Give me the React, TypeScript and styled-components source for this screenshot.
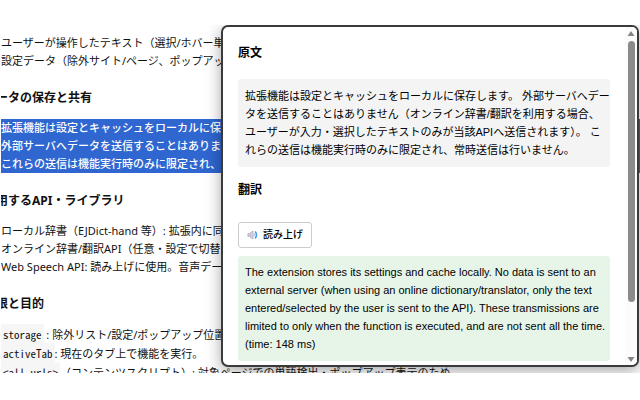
import React from "react";
import styled, { createGlobalStyle, css } from "styled-components";

const GlobalStyle = createGlobalStyle`
  * { box-sizing: border-box; }
  body { margin: 0; background: #fff; color: #111; overflow: hidden; }
`;

const Stage = styled.main`
  position: relative;
  height: calc(100vh - 52px);
  margin: 25px 0 27px;
  overflow: hidden;
  font: 11px/18px "Noto Sans", "Noto Sans CJK JP", sans-serif;
`;

const Clip = styled.div`
  height: 100%;
  margin-left: 1px;
  overflow: hidden;
`;

const Article = styled.article`
  margin-left: -17px;
  padding-top: 9px;
  white-space: nowrap;
`;

const List = styled.ul<{ $roomy?: boolean }>`
  margin: 0;
  padding: 0 0 0 17px;
  list-style: none;
  line-height: ${(p) => (p.$roomy ? "19px" : "18px")};
`;

const Selection = styled.p`
  margin: 0 0 0 17px;
  background: #2f66d0;
  color: #fff;
  font-weight: 500;
`;

const heading = css`
  font-size: 12px;
  line-height: 18px;
  font-weight: 700;
`;

const SectionTitle = styled.h3`
  ${heading}
  margin: 19px 0 12px;
`;

const Code = styled.code`
  padding: 2px;
  border-radius: 3px;
  background: #f6f6f6;
  font: 11px "Noto Sans Mono CJK JP", "Liberation Mono", monospace;
`;

const Popup = styled.section`
  position: absolute;
  inset: 0 1px 6px 221px;
  display: flex;
  overflow: hidden;
  border: 2px solid #3a3a3a;
  border-radius: 7px;
  background: #fff;
  color: #000;
  font-family: "Liberation Sans", "Noto Sans CJK JP", sans-serif;
  box-shadow: 0 4px 16px rgba(0, 0, 0, 0.35);
`;

const PopupBody = styled.div`
  flex: 1;
  min-width: 0;
  padding: 17px 15px 0;
`;

const PopupTitle = styled.h2<{ $first?: boolean }>`
  ${heading}
  margin: ${(p) => (p.$first ? "0 0 17px" : "14px 0 23px")};
`;

const TextBox = styled.p<{ $tone: "source" | "result" }>`
  margin: 0;
  padding: ${(p) => (p.$tone === "source" ? "8px 7px" : "7px 7px 8px")};
  border-radius: 3px;
  white-space: nowrap;
  background: ${(p) => (p.$tone === "source" ? "#f4f4f4" : "#e7f5e9")};
`;

const SpeakButton = styled.button`
  display: flex;
  align-items: center;
  gap: 4px;
  height: 26px;
  margin-bottom: 8px;
  padding: 0 8px;
  border: 1px solid #ccc;
  border-radius: 3px;
  background: #fff;
  color: #000;
  font: 500 10px/18px "Liberation Sans", "Noto Sans CJK JP", sans-serif;
`;

const Scrollbar = styled.div`
  display: flex;
  flex-direction: column;
  align-items: center;
  gap: 5px;
  width: 12px;
  padding: 4px 0 3px;
  background: #fcfcfc;
`;

const Track = styled.div`
  flex: 1;
  width: 7px;
`;

const Thumb = styled.div`
  height: 84%;
  border-radius: 4px;
  background: #8b8b8b;
`;

const Arrow = ({ down }: { down?: boolean }) => (
  <svg width="8" height="5" viewBox="0 0 8 5" aria-hidden="true">
    <path d={down ? "M.5 0h7L4 5Z" : "M.5 5h7L4 0Z"} fill="#858585" />
  </svg>
);

const Speaker = () => (
  <svg width="12" height="12" viewBox="0 0 12 12" fill="none" aria-hidden="true">
    <path d="M.5 4h2v4h-2Z" fill="#c4bccb" />
    <path d="M3 4 6 2v8L3 8Z" fill="#d9d2df" stroke="#aaa2b8" strokeWidth=".7" />
    <path d="M7 4.6q1 1.4 0 2.8" stroke="#8cc4f5" strokeWidth="1" />
    <path d="M8.2 2.6q2.6 3.4 0 6.8" stroke="#4a9cec" strokeWidth="1.6" />
  </svg>
);

export default function App() {
  return (
    <>
      <GlobalStyle />
      <Stage lang="ja">
        <Clip>
          <Article>
            <List>
              <li>ユーザーが操作したテキスト（選択/ホバー単語）</li>
              <li>設定データ（除外サイト/ページ、ポップアップ位置）</li>
            </List>
            <SectionTitle>データの保存と共有</SectionTitle>
            <Selection>
              拡張機能は設定とキャッシュをローカルに保存します。<br />
              外部サーバへデータを送信することはありません<br />
              これらの送信は機能実行時のみに限定され、常時送信は行いません。
            </Selection>
            <SectionTitle>使用するAPI・ライブラリ</SectionTitle>
            <List>
              <li>ローカル辞書（EJDict-hand 等）: 拡張内に同梱</li>
              <li>オンライン辞書/翻訳API（任意・設定で切替）</li>
              <li>Web Speech API: 読み上げに使用。音声データ</li>
            </List>
            <SectionTitle>権限と目的</SectionTitle>
            <List $roomy>
              <li><Code>storage</Code> : 除外リスト/設定/ポップアップ位置の保存</li>
              <li><Code>activeTab</Code>: 現在のタブ上で機能を実行。</li>
              <li><Code>&lt;all_urls&gt;</Code>（コンテンツスクリプト）: 対象ページでの単語検出・ポップアップ表示のため</li>
            </List>
          </Article>
        </Clip>
        <Popup>
          <PopupBody>
            <PopupTitle $first>原文</PopupTitle>
            <TextBox $tone="source">
              拡張機能は設定とキャッシュをローカルに保存します。 外部サーバへデー<br />
              タを送信することはありません（オンライン辞書/翻訳を利用する場合、<br />
              ユーザーが入力・選択したテキストのみが当該APIへ送信されます）。 こ<br />
              れらの送信は機能実行時のみに限定され、常時送信は行いません。
            </TextBox>
            <PopupTitle>翻訳</PopupTitle>
            <SpeakButton type="button"><Speaker />読み上げ</SpeakButton>
            <TextBox $tone="result" lang="en">
              The extension stores its settings and cache locally. No data is sent to an<br />
              external server (when using an online dictionary/translator, only the text<br />
              entered/selected by the user is sent to the API). These transmissions are<br />
              limited to only when the function is executed, and are not sent all the time.<br />
              (time: 148 ms)
            </TextBox>
          </PopupBody>
          <Scrollbar aria-hidden="true">
            <Arrow />
            <Track><Thumb /></Track>
            <Arrow down />
          </Scrollbar>
        </Popup>
      </Stage>
    </>
  );
}
